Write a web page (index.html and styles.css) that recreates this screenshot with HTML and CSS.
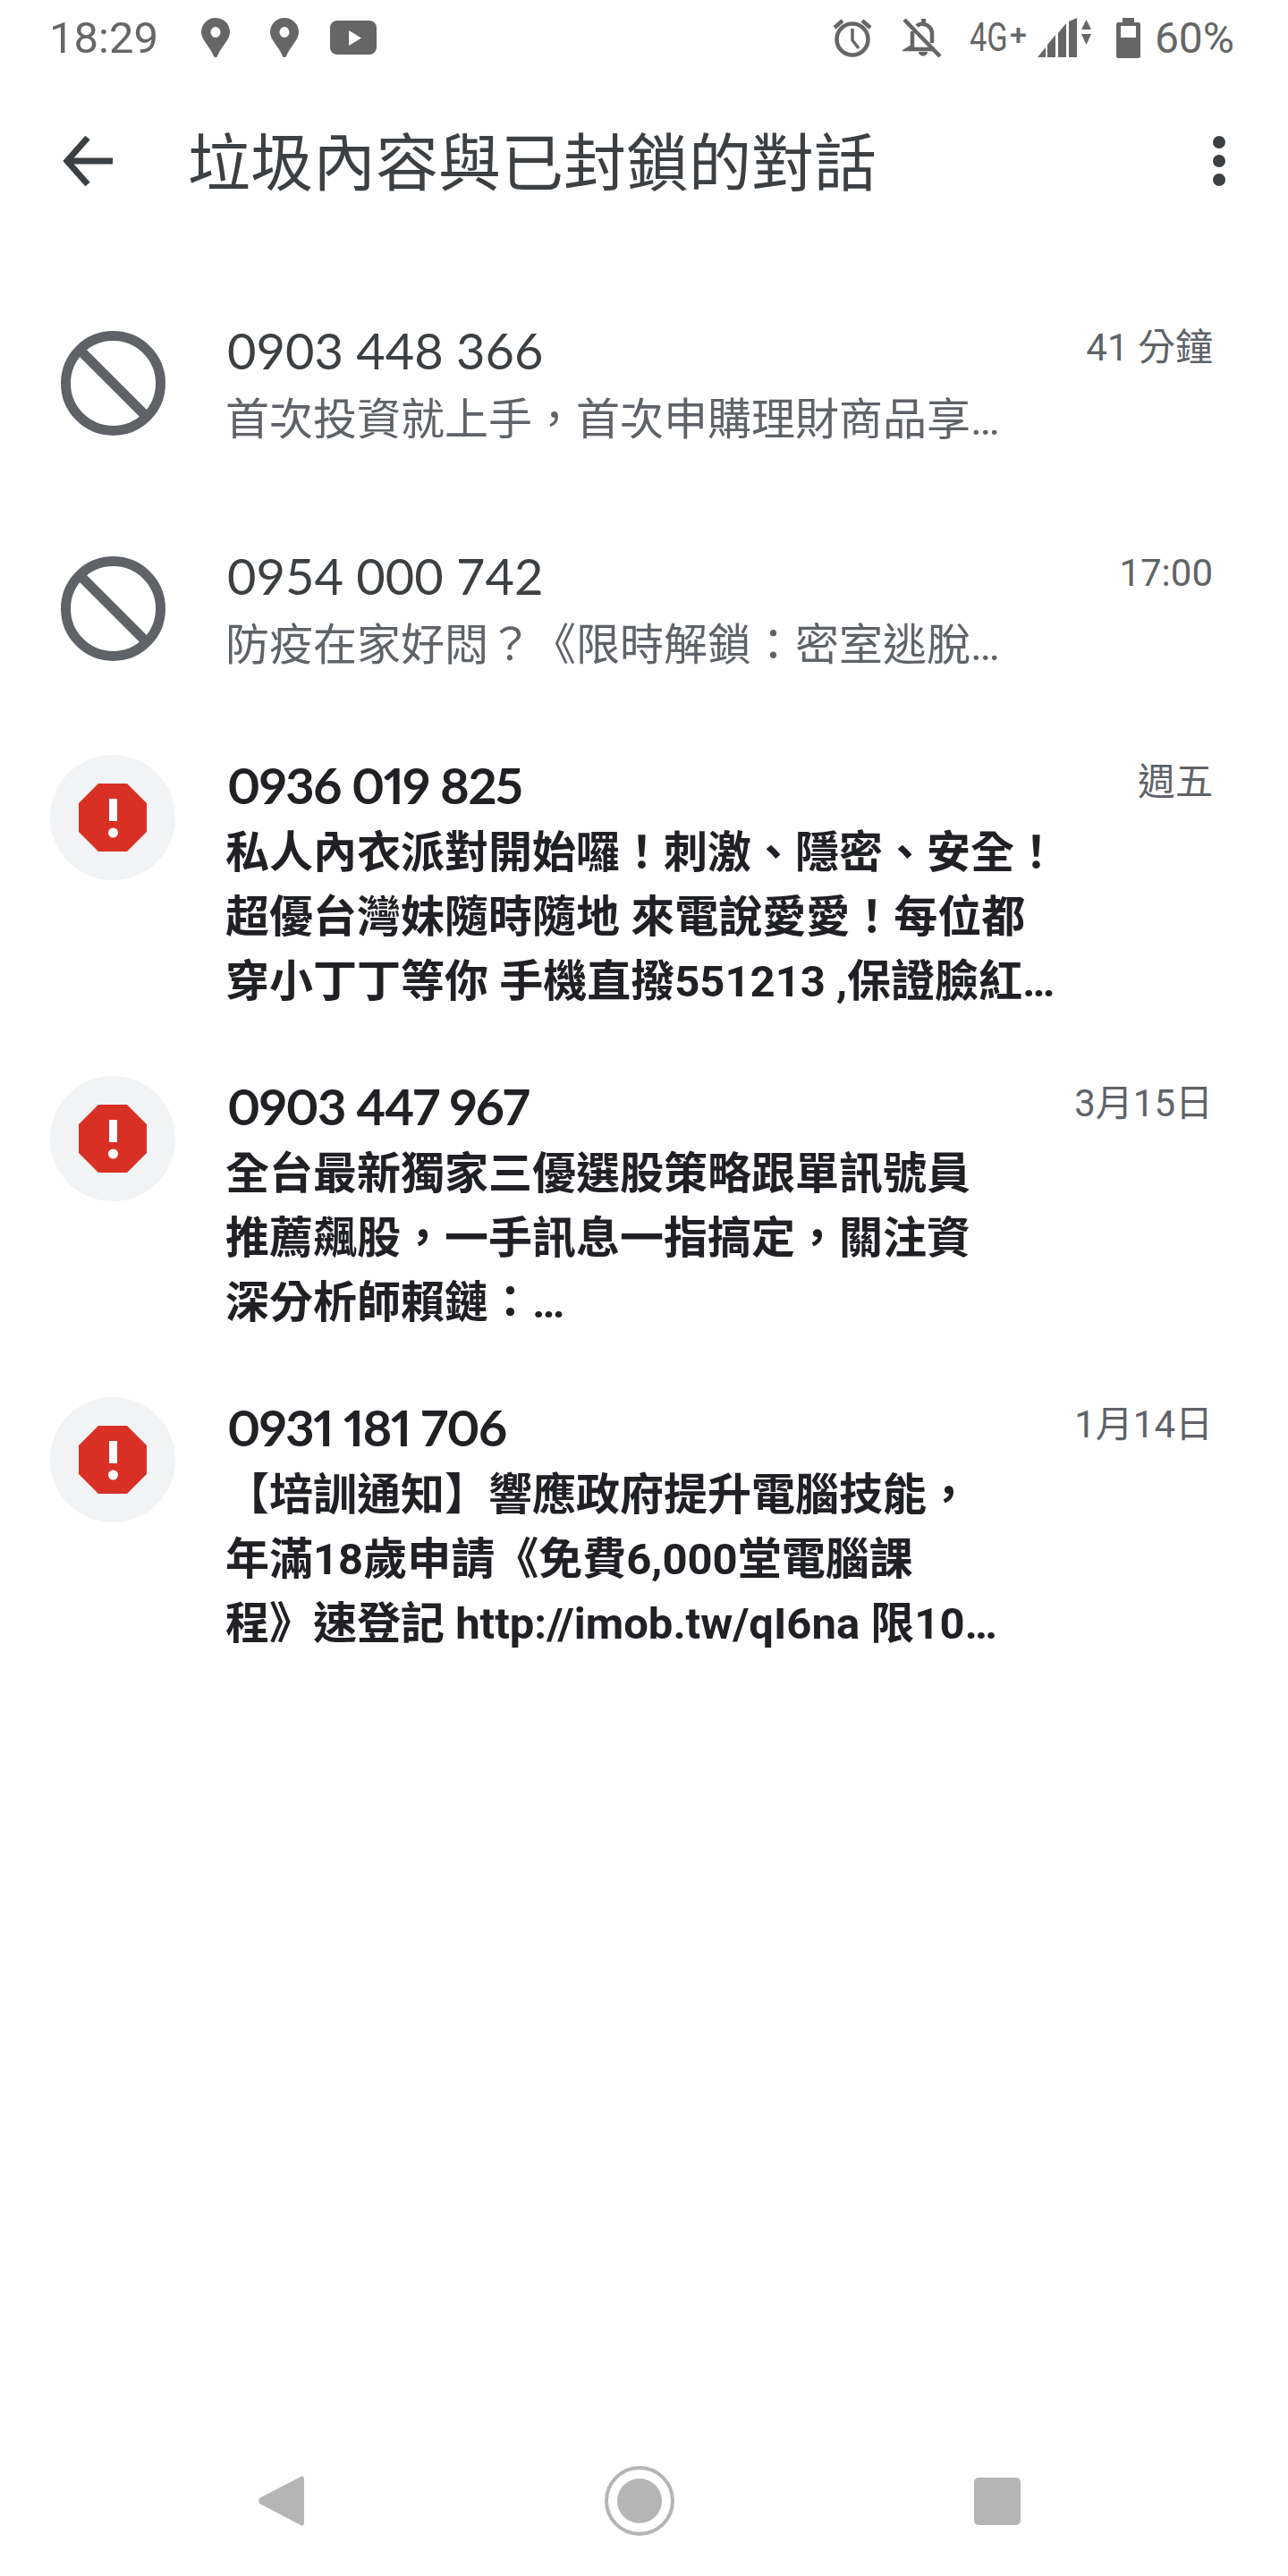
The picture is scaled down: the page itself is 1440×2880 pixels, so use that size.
FILE: index.html
```html
<!DOCTYPE html>
<html lang="zh-Hant">
<head>
    <meta charset="UTF-8">
    <meta name="viewport" content="width=device-width, initial-scale=1.0">
    <title>垃圾內容與已封鎖的對話</title>
    <link rel="stylesheet" href="styles.css">
</head>
<body>

    <div class="phone">

        <div class="status-bar">
            <span class="clock">18:29</span>
            <svg class="pin" viewBox="0 0 32 44"><path fill-rule="evenodd" d="M16 0C7 0 0 7 0 16c0 9 10 16 14 27 .6 1.4 3.400 1.400 4 0 4-11 14-18 14-27C32 7 25 0 16 0zm0 10a5.500 6 0 1 1 0 12 5.500 6 0 0 1 0-12z"/></svg>
            <svg class="pin pin-two" viewBox="0 0 32 44"><path fill-rule="evenodd" d="M16 0C7 0 0 7 0 16c0 9 10 16 14 27 .6 1.4 3.400 1.400 4 0 4-11 14-18 14-27C32 7 25 0 16 0zm0 10a5.500 6 0 1 1 0 12 5.500 6 0 0 1 0-12z"/></svg>
            <svg class="yt" viewBox="0 0 52 38"><rect width="52" height="38" rx="8"/><path fill="#fff" d="M21 11l14 8.500-14 8.500z"/></svg>

            <div class="status-right">
                <svg class="alarm" viewBox="0 0 44 44" fill="none" stroke="#666">
                    <circle cx="22" cy="24" r="17.500" stroke-width="4.500"/>
                    <path stroke-width="3.500" d="M22 12v13l7 9"/>
                    <path stroke-width="4.500" d="M2 11l9-8M42 11l-9-8"/>
                </svg>
                <svg class="bell-off" viewBox="0 0 44 44">
                    <path fill="none" stroke="#666" stroke-width="4.500" d="M11 15v17l-5 3h30M33 28V17c0-5-4-9-9-10-3-.6-6 0-8 2"/>
                    <path d="M21 1h5v6h-5zM18 38h10c0 6-10 6-10 0z"/>
                    <path fill="none" stroke="#666" stroke-width="4.500" d="M2 2l40 41"/>
                </svg>
                <div class="net"><span class="net-type">4G</span><span class="net-plus">+</span></div>
                <svg class="signal" viewBox="0 0 60 44">
                    <path d="M0 44l9-11v11zM11 44V30l9-11v25zM23 44V17l9-11v38zM35 44V4l9-4v44z"/>
                    <path d="M49 13l5.500-11L60 13zM49 18h11l-5.500 12z"/>
                </svg>
                <svg class="battery" viewBox="0 0 27 45">
                    <path fill-rule="evenodd" d="M7 0h13v5h5c1 0 2 1 2 2v36c0 1-1 2-2 2H2c-1 0-2-1-2-2V7c0-1 1-2 2-2h5zM5 9v13h17V9z"/>
                </svg>
                <span class="percent">60%</span>
            </div>
        </div>

        <div class="toolbar">
            <svg class="back" viewBox="0 0 56 56" fill="none" stroke="#3c4043" stroke-width="7"><path d="M56 28H5M28 2L5 28l23 26"/></svg>
            <h1>垃圾內容與已封鎖的對話</h1>
            <div class="kebab"><i></i><i></i><i></i></div>
        </div>

        <div class="list">

            <div class="row">
                <div class="avatar"><svg class="blocked" viewBox="0 0 117 117"><circle cx="58.500" cy="58.500" r="53"/><path d="M21 21l75 75"/></svg></div>
                <div class="text">
                    <div class="top"><span class="name">0903 448 366</span><span class="time">41 分鐘</span></div>
                    <div class="msg">首次投資就上手，首次申購理財商品享…</div>
                </div>
            </div>

            <div class="row">
                <div class="avatar"><svg class="blocked" viewBox="0 0 117 117"><circle cx="58.500" cy="58.500" r="53"/><path d="M21 21l75 75"/></svg></div>
                <div class="text">
                    <div class="top"><span class="name">0954 000 742</span><span class="time">17:00</span></div>
                    <div class="msg">防疫在家好悶？《限時解鎖：密室逃脫…</div>
                </div>
            </div>

            <div class="row unread">
                <div class="avatar"><svg class="octagon" viewBox="0 0 76 76"><path fill="#d93025" d="M22 0h32l22 22v32L54 76H22L0 54V22z"/><path fill="#fff" d="M34 17h9v25h-9z"/><circle fill="#fff" cx="38.500" cy="55" r="5.500"/></svg></div>
                <div class="text">
                    <div class="top"><span class="name">0936 019 825</span><span class="time">週五</span></div>
                    <div class="msg">私人內衣派對開始囉！刺激、隱密、安全！<br>超優台灣妹隨時隨地 來電說愛愛！每位都<br>穿小丁丁等你 手機直撥551213 ,保證臉紅…</div>
                </div>
            </div>

            <div class="row unread">
                <div class="avatar"><svg class="octagon" viewBox="0 0 76 76"><path fill="#d93025" d="M22 0h32l22 22v32L54 76H22L0 54V22z"/><path fill="#fff" d="M34 17h9v25h-9z"/><circle fill="#fff" cx="38.500" cy="55" r="5.500"/></svg></div>
                <div class="text">
                    <div class="top"><span class="name">0903 447 967</span><span class="time">3月15日</span></div>
                    <div class="msg">全台最新獨家三優選股策略跟單訊號員<br>推薦飆股，一手訊息一指搞定，關注資<br>深分析師賴鏈：…</div>
                </div>
            </div>

            <div class="row unread">
                <div class="avatar"><svg class="octagon" viewBox="0 0 76 76"><path fill="#d93025" d="M22 0h32l22 22v32L54 76H22L0 54V22z"/><path fill="#fff" d="M34 17h9v25h-9z"/><circle fill="#fff" cx="38.500" cy="55" r="5.500"/></svg></div>
                <div class="text">
                    <div class="top"><span class="name">0931 181 706</span><span class="time">1月14日</span></div>
                    <div class="msg">【培訓通知】響應政府提升電腦技能，<br>年滿18歲申請《免費6,000堂電腦課<br>程》速登記 http://imob.tw/qI6na 限10…</div>
                </div>
            </div>

        </div>

        <div class="nav">
            <svg class="nav-back" viewBox="0 0 51 56"><path d="M47 1c2-2 4 0 4 2v50c0 2-2 4-4 2L1 31c-1-2-1-4 0-6z"/></svg>
            <svg class="nav-home" viewBox="0 0 78 78"><circle cx="39" cy="39" r="37" fill="none" stroke="#b5b5b5" stroke-width="4"/><circle cx="39" cy="39" r="25"/></svg>
            <div class="nav-recent"></div>
        </div>

    </div>

</body>
</html>
```

FILE: styles.css
```css
body {
    margin: 0;
    background: #fff;
    font-family: Roboto, "Noto Sans CJK TC", sans-serif;
}

.phone {
    width: 1440px;
    height: 2880px;
    display: flex;
    flex-direction: column;
    overflow: hidden;
}

/* status bar */
.status-bar {
    height: 84px;
    flex-shrink: 0;
    display: flex;
    align-items: center;
    padding: 0 60px 0 55px;
    color: #666;
    fill: #666;
}

.clock {
    font-size: 49px;
    width: 170px;
}

.pin {
    width: 32px;
    height: 44px;
    margin-right: 45px;
}

.pin-two {
    margin-right: 35px;
}

.yt {
    width: 52px;
    height: 38px;
}

.status-right {
    margin-left: auto;
    display: flex;
    align-items: center;
}

.alarm {
    width: 44px;
    height: 44px;
    margin-right: 34px;
}

.bell-off {
    width: 44px;
    height: 44px;
    margin-right: 31px;
}

.net {
    width: 66px;
    height: 44px;
    margin-right: 10px;
    display: flex;
    align-items: flex-start;
    line-height: 44px;
}

/* the network type is set narrower than the clock digits */
.net-type {
    font-size: 44px;
    width: 45px;
    white-space: nowrap;
    transform: scaleX(.78);
    transform-origin: left center;
}

.net-plus {
    font-size: 34px;
    font-weight: 500;
    line-height: 36px;
}

.signal {
    width: 60px;
    height: 44px;
    margin-right: 28px;
}

.battery {
    width: 27px;
    height: 45px;
    margin-right: 16px;
}

.percent {
    font-size: 48px;
}

/* title row */
.toolbar {
    height: 192px;
    flex-shrink: 0;
    display: flex;
    align-items: center;
    padding: 0 70px;
    color: #3c4043;
}

.back {
    width: 56px;
    height: 56px;
    margin-right: 84px;
}

h1 {
    margin: 0;
    padding-bottom: 6px;
    font-size: 70px;
    font-weight: 400;
}

.kebab {
    margin-left: auto;
    display: flex;
    flex-direction: column;
    gap: 7px;
}

.kebab i {
    display: block;
    width: 14px;
    height: 14px;
    border-radius: 50%;
    background: #3c4043;
}

/* conversations */
.list {
    flex: 1;
    padding-top: 26px;
}

.row {
    display: flex;
    align-items: center;
    padding: 53px 84px 48px 56px;
}

.row.unread {
    align-items: flex-start;
    padding: 35px 84px 31px 56px;
}

.avatar {
    width: 140px;
    height: 140px;
    flex-shrink: 0;
    margin: 0 58px 5px 0;
    display: flex;
    align-items: center;
    justify-content: center;
    border-radius: 50%;
}

.unread .avatar {
    background: #f1f3f4;
    margin-top: 3px;
}

.blocked {
    width: 117px;
    height: 117px;
    fill: none;
    stroke: #5f6368;
    stroke-width: 11;
}

.octagon {
    width: 76px;
    height: 76px;
}

.text {
    flex: 1;
}

.top {
    display: flex;
    justify-content: space-between;
    height: 77px;
}

.name {
    font-family: Lato, "Noto Sans CJK TC", sans-serif;
    font-size: 56px;
    line-height: 74px;
    color: #3c4043;
}

.unread .name {
    font-weight: 700;
    font-variant-numeric: proportional-nums;
    letter-spacing: -1.5px;
    color: #202124;
}

.time {
    font-size: 42px;
    line-height: 68px;
    color: #5f6368;
}

.msg {
    margin: 2px 0 0 -2px;
    font-size: 49px;
    line-height: 72px;
    color: #5f6368;
}

.unread .msg {
    margin-top: 0;
    font-weight: 700;
    color: #202124;
}

/* navigation buttons */
.nav {
    height: 168px;
    flex-shrink: 0;
    display: flex;
    align-items: center;
    justify-content: space-between;
    padding: 0 299px 0 289px;
    fill: #b5b5b5;
}

.nav-back {
    width: 51px;
    height: 56px;
}

.nav-home {
    width: 78px;
    height: 78px;
}

.nav-recent {
    width: 52px;
    height: 53px;
    border-radius: 5px;
    background: #b5b5b5;
}
```
